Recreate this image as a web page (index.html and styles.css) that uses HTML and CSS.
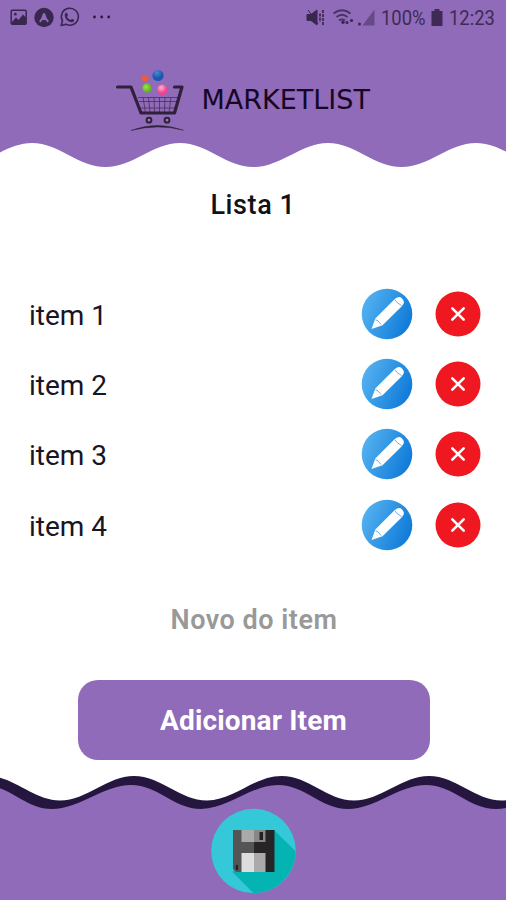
FILE: index.html
```html
<!DOCTYPE html>
<html lang="pt-BR">
<head>
<meta charset="utf-8">
<title>Marketlist</title>
<link rel="stylesheet" href="styles.css">
</head>
<body>
<svg class="defs" aria-hidden="true">
  <defs>
    <linearGradient id="blue" x1="0" y1="0.3" x2="1" y2="0.7"><stop offset="0" stop-color="#55b2f0"/><stop offset="1" stop-color="#0c78d8"/></linearGradient>
    <radialGradient id="ballBlue" cx=".4" cy=".25"><stop offset="0" stop-color="#4a8ad8"/><stop offset="1" stop-color="#1d56ae"/></radialGradient>
    <radialGradient id="ballGreen" cx=".4" cy=".4"><stop offset="0" stop-color="#a5e050"/><stop offset="1" stop-color="#62b420"/></radialGradient>
    <radialGradient id="ballPink" cx=".4" cy=".3"><stop offset="0" stop-color="#ffb3d2"/><stop offset="1" stop-color="#ee4590"/></radialGradient>
    <symbol id="pencil" viewBox="0 0 52 52">
      <circle cx="26" cy="26" r="25.3" fill="url(#blue)"/>
      <path d="M10.500 41 14.300 30.500 33.500 11.200 36 9.500Q39.500 8 41.500 11Q44 14 42 16.500L40.800 18.300 21.500 37.200Z" fill="#fff"/>
      <path d="M14.500 31.800 17 32.800 20 36.500M34 11.800 36 14.500 40.500 17.500" fill="none" stroke="#58a8e6" stroke-width=".9"/>
    </symbol>
    <symbol id="remove" viewBox="0 0 46 46">
      <circle cx="23" cy="23" r="22.500" fill="#f01820"/>
      <path d="M17.300 17.300 28.700 28.700M28.700 17.300 17.300 28.700" stroke="#fff" stroke-width="2.600" stroke-linecap="round"/>
    </symbol>
  </defs>
</svg>
<div class="screen">
  <header class="top">
    <div class="status">
      <svg width="120" height="36" viewBox="0 0 120 36">
        <rect x="11.200" y="10.200" width="15" height="14" rx="1" fill="none" stroke="#3a2750" stroke-width="1.500"/>
        <path d="M12 22 16 17.500 18.500 20 23 14.500 26 17.500V24H12Z" fill="#3a2750"/><circle cx="15.300" cy="14.200" r="1.400" fill="#3a2750"/>
        <circle cx="44" cy="17.500" r="9.700" fill="#3a2750"/>
        <path d="M39.800 21.800Q42.800 18.500 44 13.500Q45.200 18.500 48.200 21.800M42.500 19.500 44 17.800 45.500 19.500" fill="none" stroke="#8f6bb9" stroke-width="1.900"/>
        <path d="M61.200 25.500 62.500 21A8.500 8.500 0 1 1 66 24.300Z" fill="none" stroke="#3a2750" stroke-width="1.600" stroke-linejoin="round"/>
        <path d="M65.400 12.800 67.200 13 68 15.500 67 16.700Q68.200 19 70.700 19.900L72 18.700 74.300 20Q74 22.500 71.500 22.300Q65.500 21 64.600 15.500Z" fill="#3a2750"/>
        <g fill="#2b183d"><circle cx="94.500" cy="17" r="1.400"/><circle cx="101.700" cy="17" r="1.400"/><circle cx="108.700" cy="17" r="1.400"/></g>
      </svg>
      <div class="status-right">
        <svg width="72" height="36" viewBox="305 0 72 36">
          <path d="M307 14.500H311L317 10V25L311 20.500H307ZM308 10 318 24" fill="#3a2750" stroke="#3a2750"/>
          <path d="M320 13.500V22M323 10V25" fill="none" stroke="#3a2750" stroke-width="1.700" stroke-dasharray="3 1"/>
          <g fill="none" stroke="#4a3265" stroke-width="2"><path d="M333.500 13.500Q342 7 350.500 13.500"/><path d="M336.500 17Q342 12.500 347.500 17"/><path d="M339 20.500Q342 18.300 345 20.500"/></g>
          <g fill="#3a2750"><circle cx="343" cy="22.300" r="1.700"/><circle cx="347" cy="22.500" r="1.500"/><circle cx="351.500" cy="20.500" r="1.600"/><circle cx="359.500" cy="24" r="1.500"/></g>
          <path d="M362.500 25.500 374.500 9.500V25.500Z" fill="#67498a"/>
        </svg>
        <span class="pct">100%</span>
        <svg class="battery" width="12" height="18" viewBox="0 0 12 18"><path d="M3.500 0H8.500V2H11.500V17H.5V2H3.500Z" fill="#3f2a56"/></svg>
        <span class="clock">12:23</span>
      </div>
    </div>
    <div class="brand">
      <svg width="72" height="66" viewBox="115 67 72 66">
        <circle cx="145" cy="78.200" r="3.200" fill="#ed5b38"/><circle cx="158" cy="75.500" r="5.600" fill="url(#ballBlue)"/>
        <circle cx="147" cy="88" r="4.700" fill="url(#ballGreen)"/><circle cx="162.300" cy="89.800" r="5.200" fill="url(#ballPink)"/>
        <path d="M138 97.500H178M139 101.500H177M143 97 145.500 113M148.500 97 150 113M154 97 154.500 113M159.500 97V113M165 97 164.500 113M171 97 169 113M140 108H175" fill="none" stroke="#51365f" stroke-width=".9"/>
        <path d="M117.500 87H131L141 113H174.500L182 87H174.500" fill="none" stroke="#30203b" stroke-width="3.200" stroke-linecap="round" stroke-linejoin="round"/>
        <g fill="#9480a5" stroke="#30203b" stroke-width="2"><circle cx="149" cy="120.200" r="2.400"/><circle cx="167" cy="120.200" r="2.400"/></g>
        <path d="M131 130.500Q157 120.500 183.500 130.200Q157 123.500 131 130.500Z" fill="#30203b" stroke="#30203b" stroke-width=".4"/>
      </svg>
      <span class="brand-name">MARKETLIST</span>
    </div>
    <svg class="wave" width="506" height="27" viewBox="0 141 506 27">
      <path fill="#8f6bb9" d="M-42 141V167C-15 167 5 143 32 143S78 167 105.500 167 153 143 180 143 226 167 253.500 167 301 143 328 143 374 167 401.500 167 449 143 476 143 522 167 550 167V141Z"/>
    </svg>
  </header>
  <main>
    <h1>Lista 1</h1>
    <ul class="items">
      <li><span>item 1</span><svg class="edit"><use href="#pencil"/></svg><svg class="del"><use href="#remove"/></svg></li>
      <li><span>item 2</span><svg class="edit"><use href="#pencil"/></svg><svg class="del"><use href="#remove"/></svg></li>
      <li><span>item 3</span><svg class="edit"><use href="#pencil"/></svg><svg class="del"><use href="#remove"/></svg></li>
      <li><span>item 4</span><svg class="edit"><use href="#pencil"/></svg><svg class="del"><use href="#remove"/></svg></li>
    </ul>
    <div class="new-item">Novo do item</div>
    <button class="add">Adicionar Item</button>
  </main>
  <footer>
    <svg class="wave" width="506" height="36" viewBox="0 774 506 36">
      <path fill="#251640" d="M-13 776C14 776 33 800.500 60 800.500S107 776 134 776 180 800.500 207 800.500 254 776 281.500 776 327 800.500 354 800.500 402 776 429 776 475 800.500 502 800.500 549 776 576 776V810H-13Z"/>
      <path fill="#8f6bb9" d="M-17 785C10 785 25 809 52 809S104 785 131 785 174 809 201 809 251 785 278 785 321 809 348 809 399 785 426 785 469 809 496 809 547 785 574 785V810H-17Z"/>
    </svg>
    <svg class="save" width="86" height="86" viewBox="210 808 86 86">
      <circle cx="253.500" cy="851" r="42.300" fill="#35c8d8"/>
      <path d="M274 830 295.600 851.300A42.300 42.300 0 0 1 253.500 893.300L232.500 872Z" fill="#04b4b3"/>
      <path d="M233 830H254V872H236L233 869Z" fill="#555"/><path d="M254 830H274.500V872H254Z" fill="#272525"/>
      <path d="M241.500 830H254V842H241.500Z" fill="#aaa"/><path d="M254 830H265.500V842H254Z" fill="#888"/>
      <path d="M241.500 853H254V872H241.500Z" fill="#ddd"/><path d="M254 853H265.500V872H254Z" fill="#aaa"/>
      <path d="M259.500 832H263V840H259.500ZM235.800 865H238V870H235.800Z" fill="#222"/>
    </svg>
  </footer>
</div>
</body>
</html>
```

FILE: styles.css
```css
* { box-sizing: border-box; }
body { margin: 0; font-family: Roboto, "Liberation Sans", sans-serif; background: #fff; }
svg { display: block; flex: none; }
.defs { position: absolute; width: 0; height: 0; }
.screen { width: 506px; height: 900px; display: flex; flex-direction: column; overflow: hidden; }
.top { height: 168px; display: flex; flex-direction: column; background: linear-gradient(#8f6bb9 141px, #fff 141px); }
.status { height: 36px; display: flex; justify-content: space-between; color: #3f2a56; font-size: 20px; line-height: 36px; }
.status-right { display: flex; width: 201px; }
.pct, .clock { display: block; transform-origin: left center; white-space: nowrap; }
.pct { width: 44px; margin-left: 4px; transform: scaleX(.92); }
.battery { margin: 9px 5px 0 6px; }
.clock { margin-left: 1px; transform: scaleX(.92); }
.brand { height: 105px; display: flex; align-items: flex-start; padding: 31px 0 0 115px; }
.brand-name { margin-left: 14.500px; padding-top: 17px; font: 27px/32px "DejaVu Sans", sans-serif; color: #160727; }
main { flex: 1; display: flex; flex-direction: column; align-items: center; }
h1 { margin: 19px 0 0; font-size: 27px; line-height: 36px; font-weight: 500; letter-spacing: .6px; color: #111118; }
.items { list-style: none; width: 506px; margin: 57px 0 0; padding: 0 25px 0 29px; }
.items li { height: 70.200px; display: flex; align-items: flex-start; }
.items span { flex: 1; padding-top: 18px; font-size: 28px; line-height: 36px; color: #181525; }
.edit { width: 52px; height: 52px; margin: 8px 22px 0 0; }
.del { width: 46px; height: 46px; margin-top: 11px; }
.new-item { margin-top: 41px; padding-left: 2px; font-size: 27px; line-height: 36px; font-weight: 600; letter-spacing: .5px; color: #999; }
.add { width: 352px; height: 80px; margin: 42px 0 0 1px; padding: 3px 0 0; border: 0; border-radius: 20px; background: #8f6bb9; color: #fff; font: 700 28px/36px Roboto, sans-serif; letter-spacing: .15px; }
footer { height: 126px; display: flex; flex-direction: column; align-items: center; background: linear-gradient(#fff 35px, #8f6bb9 35px); }
.save { margin-top: -2px; }
```
